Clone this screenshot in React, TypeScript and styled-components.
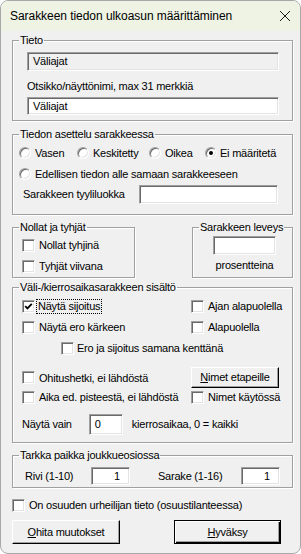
import React from "react";
import styled, { createGlobalStyle } from "styled-components";

const Global = createGlobalStyle`
  html, body { margin: 0; padding: 0; background: #ffffff; }
  * { box-sizing: border-box; }
`;

const FONT = `"Liberation Sans", Arial, sans-serif`;

const Window = styled.div`
  width: 301px;
  height: 554px;
  border: 1px solid #a8a8a8;
  border-radius: 8px;
  overflow: hidden;
  background: #f0f0f0;
  font-family: ${FONT};
  font-size: 11px;
  color: #000;
  display: flex;
  flex-direction: column;
`;

const TitleBar = styled.div`
  height: 30px;
  flex: none;
  background: #eef3e4;
  display: flex;
  align-items: center;
  justify-content: space-between;
  padding: 0 8px 0 9px;
`;

const TitleText = styled.span`
  font-size: 12px;
  font-family: ${FONT};
  letter-spacing: -0.05px;
`;

const CloseIcon = styled.svg`
  width: 12px;
  height: 12px;
  margin-right: 1px;
`;

const Body = styled.div`
  padding: 3px 8px 0 11px;
  display: flex;
  flex-direction: column;
  letter-spacing: -0.22px;
`;

const Group = styled.fieldset<{ $w?: number; $mt?: number }>`
  margin: ${(p) => p.$mt ?? 0}px 0 0 0;
  padding: 0;
  width: ${(p) => p.$w ?? 281}px;
  border: 1px solid #a0a0a0;
  box-shadow: inset 1px 1px 0 #ffffff, 1px 1px 0 #ffffff;
  min-width: 0;
`;

const Legend = styled.legend`
  margin-left: 6px;
  padding: 0 1px;
  line-height: 13px;
  height: 13px;
`;

const Stack = styled.div<{ $pt: number; $pb: number; $pl: number; $pr?: number }>`
  display: flex;
  flex-direction: column;
  padding: ${(p) => p.$pt}px ${(p) => p.$pr ?? 0}px ${(p) => p.$pb}px ${(p) => p.$pl}px;
`;

const Field = styled.div<{ $w: number; $h: number; $ro?: boolean; $right?: boolean; $mt?: number }>`
  width: ${(p) => p.$w}px;
  height: ${(p) => p.$h}px;
  margin-top: ${(p) => p.$mt ?? 0}px;
  flex: none;
  background: ${(p) => (p.$ro ? "#f0f0f0" : "#ffffff")};
  border-style: solid;
  border-width: 1px;
  border-color: #a0a0a0 #ffffff #ffffff #a0a0a0;
  box-shadow: inset 1px 1px 0 #696969, inset -1px -1px 0 #e3e3e3;
  display: flex;
  align-items: center;
  justify-content: ${(p) => (p.$right ? "flex-end" : "flex-start")};
  padding: 0 ${(p) => (p.$right ? 9 : 0)}px 0 ${(p) => (p.$right ? 0 : 5)}px;
  line-height: 13px;
`;

const Label = styled.div<{ $mt?: number; $ml?: number; $center?: boolean }>`
  line-height: 13px;
  height: 13px;
  margin-top: ${(p) => p.$mt ?? 0}px;
  margin-left: ${(p) => p.$ml ?? 0}px;
  text-align: ${(p) => (p.$center ? "center" : "left")};
  white-space: nowrap;
`;

const Row = styled.div<{ $h: number; $mt?: number; $ml?: number }>`
  display: flex;
  align-items: center;
  height: ${(p) => p.$h}px;
  margin-top: ${(p) => p.$mt ?? 0}px;
  margin-left: ${(p) => p.$ml ?? 0}px;
  white-space: nowrap;
`;

const RadioGrid = styled.div`
  display: grid;
  grid-template-columns: 58px 72px 56px 1fr;
  height: 16px;
  align-items: center;
`;

const Option = styled.label<{ $gap: number }>`
  display: flex;
  align-items: center;
  gap: ${(p) => p.$gap}px;
  white-space: nowrap;
`;

const RadioCircle = styled.span<{ $on?: boolean }>`
  width: 12px;
  height: 12px;
  flex: none;
  border-radius: 50%;
  background: #ffffff;
  border-style: solid;
  border-width: 1px;
  border-color: #a0a0a0 #ffffff #ffffff #a0a0a0;
  box-shadow: inset 1px 1px 0 #696969, inset -1px -1px 0 #e3e3e3;
  display: flex;
  align-items: center;
  justify-content: center;
  &::after {
    content: "";
    width: 4px;
    height: 4px;
    border-radius: 50%;
    background: #000;
    display: ${(p) => (p.$on ? "block" : "none")};
  }
`;

const Box = styled.span`
  width: 13px;
  height: 13px;
  flex: none;
  background: #ffffff;
  border-style: solid;
  border-width: 1px;
  border-color: #a0a0a0 #ffffff #ffffff #a0a0a0;
  box-shadow: inset 1px 1px 0 #696969, inset -1px -1px 0 #e3e3e3;
  display: flex;
  align-items: center;
  justify-content: center;
`;

const Focus = styled.span`
  outline: 1px dotted #000;
  outline-offset: 0px;
  padding: 0 1px;
  line-height: 13px;
`;

const Check = ({ on }: { on?: boolean }) => (
  <Box>
    {on && (
      <svg width="9" height="9" viewBox="0 0 9 9">
        <path d="M1.2 4.2 L3.4 6.4 L7.8 1.8" fill="none" stroke="#000" strokeWidth="1.8" />
      </svg>
    )}
  </Box>
);

const Grid2 = styled.div`
  display: grid;
  grid-template-columns: 169px 1fr;
  align-items: center;
`;

const Btn = styled.div<{ $w: number; $h: number; $def?: boolean }>`
  width: ${(p) => p.$w}px;
  height: ${(p) => p.$h}px;
  flex: none;
  background: #f0f0f0;
  border: 1px solid ${(p) => (p.$def ? "#000000" : "#ffffff")};
  box-shadow: ${(p) =>
    p.$def
      ? "inset 1px 1px 0 #ffffff, inset -1px -1px 0 #000000, inset -2px -2px 0 #a0a0a0"
      : "inset -1px -1px 0 #a0a0a0"};
  border-right-color: #000;
  border-bottom-color: #000;
  display: flex;
  align-items: center;
  justify-content: center;
  line-height: 13px;
  white-space: nowrap;
  u { text-decoration: underline; text-underline-offset: 1px; }
`;

const SideBySide = styled.div<{ $mt: number }>`
  display: flex;
  justify-content: space-between;
  width: 281px;
  margin-top: ${(p) => p.$mt}px;
`;

const Buttons = styled.div`
  display: flex;
  justify-content: space-between;
  width: 269px;
  margin-top: 7px;
`;

export default function App() {
  return (
    <>
      <Global />
      <Window>
        <TitleBar>
          <TitleText>Sarakkeen tiedon ulkoasun määrittäminen</TitleText>
          <CloseIcon viewBox="0 0 12 12">
            <path d="M1 1 L11 11 M11 1 L1 11" stroke="#1a1a1a" strokeWidth="1" fill="none" />
          </CloseIcon>
        </TitleBar>
        <Body>
          <Group>
            <Legend>Tieto</Legend>
            <Stack $pt={5} $pb={5} $pl={14}>
              <Field $w={252} $h={19} $ro>Väliajat</Field>
              <Label $mt={9}>Otsikko/näyttönimi, max 31 merkkiä</Label>
              <Field $w={252} $h={18} $mt={4}>Väliajat</Field>
            </Stack>
          </Group>

          <Group $mt={7}>
            <Legend>Tiedon asettelu sarakkeessa</Legend>
            <Stack $pt={4} $pb={10} $pl={6}>
              <RadioGrid>
                <Option $gap={4}><RadioCircle />Vasen</Option>
                <Option $gap={4}><RadioCircle />Keskitetty</Option>
                <Option $gap={4}><RadioCircle />Oikea</Option>
                <Option $gap={3}><RadioCircle $on />Ei määritetä</Option>
              </RadioGrid>
              <Row $h={16} $mt={5}>
                <Option $gap={4}><RadioCircle />Edellisen tiedon alle samaan sarakkeeseen</Option>
              </Row>
              <Row $h={19} $mt={3} $ml={4}>
                <Label>Sarakkeen tyyliluokka</Label>
                <Field $w={139} $h={19} style={{ marginLeft: "auto", marginRight: 14 }} />
              </Row>
            </Stack>
          </Group>

          <SideBySide $mt={6}>
            <Group $w={123}>
              <Legend>Nollat ja tyhjät</Legend>
              <Stack $pt={3} $pb={3} $pl={9}>
                <Row $h={16}><Option $gap={4}><Check />Nollat tyhjinä</Option></Row>
                <Row $h={16} $mt={5}><Option $gap={4}><Check />Tyhjät viivana</Option></Row>
              </Stack>
            </Group>
            <Group $w={101}>
              <Legend>Sarakkeen leveys</Legend>
              <Stack $pt={2} $pb={5} $pl={20}>
                <Field $w={63} $h={19} />
                <Label $mt={4} style={{ width: 63 }} $center>prosentteina</Label>
              </Stack>
            </Group>
          </SideBySide>

          <Group $mt={3}>
            <Legend>Väli-/kierrosaikasarakkeen sisältö</Legend>
            <Stack $pt={4} $pb={7} $pl={9}>
              <Grid2 style={{ height: 16 }}>
                <Option $gap={2}><Check on /><Focus>Näytä sijoitus</Focus></Option>
                <Option $gap={4}><Check />Ajan alapuolella</Option>
              </Grid2>
              <Grid2 style={{ height: 16, marginTop: 5 }}>
                <Option $gap={4}><Check />Näytä ero kärkeen</Option>
                <Option $gap={4}><Check />Alapuolella</Option>
              </Grid2>
              <Row $h={16} $mt={5} $ml={39}>
                <Option $gap={3}><Check />Ero ja sijoitus samana kenttänä</Option>
              </Row>
              <Grid2 style={{ height: 21, marginTop: 11 }}>
                <Option $gap={4}><Check />Ohitushetki, ei lähdöstä</Option>
                <Btn $w={88} $h={21}><span><u>N</u>imet etapeille</span></Btn>
              </Grid2>
              <Grid2 style={{ height: 16, marginTop: 1 }}>
                <Option $gap={4}><Check />Aika ed. pisteestä, ei lähdöstä</Option>
                <Option $gap={4}><Check />Nimet käytössä</Option>
              </Grid2>
              <Row $h={21} $mt={9}>
                <Label>Näytä vain</Label>
                <Field $w={34} $h={21} style={{ marginLeft: 17 }}>0</Field>
                <Label $ml={9}>kierrosaikaa, 0 = kaikki</Label>
              </Row>
            </Stack>
          </Group>

          <Group $mt={6}>
            <Legend>Tarkka paikka joukkueosiossa</Legend>
            <Stack $pt={5} $pb={2} $pl={12}>
              <Row $h={18}>
                <Label style={{ width: 66 }}>Rivi (1-10)</Label>
                <Field $w={39} $h={18} $right>1</Field>
                <Label $ml={28} style={{ width: 83 }}>Sarake (1-16)</Label>
                <Field $w={39} $h={18} $right>1</Field>
              </Row>
            </Stack>
          </Group>

          <Row $h={16} $mt={9}>
            <Option $gap={4}><Check />On osuuden urheilijan tieto (osuustilanteessa)</Option>
          </Row>

          <Buttons>
            <Btn $w={108} $h={24}><span><u>O</u>hita muutokset</span></Btn>
            <Btn $w={107} $h={24} $def><span><u>H</u>yväksy</span></Btn>
          </Buttons>
        </Body>
      </Window>
    </>
  );
}
